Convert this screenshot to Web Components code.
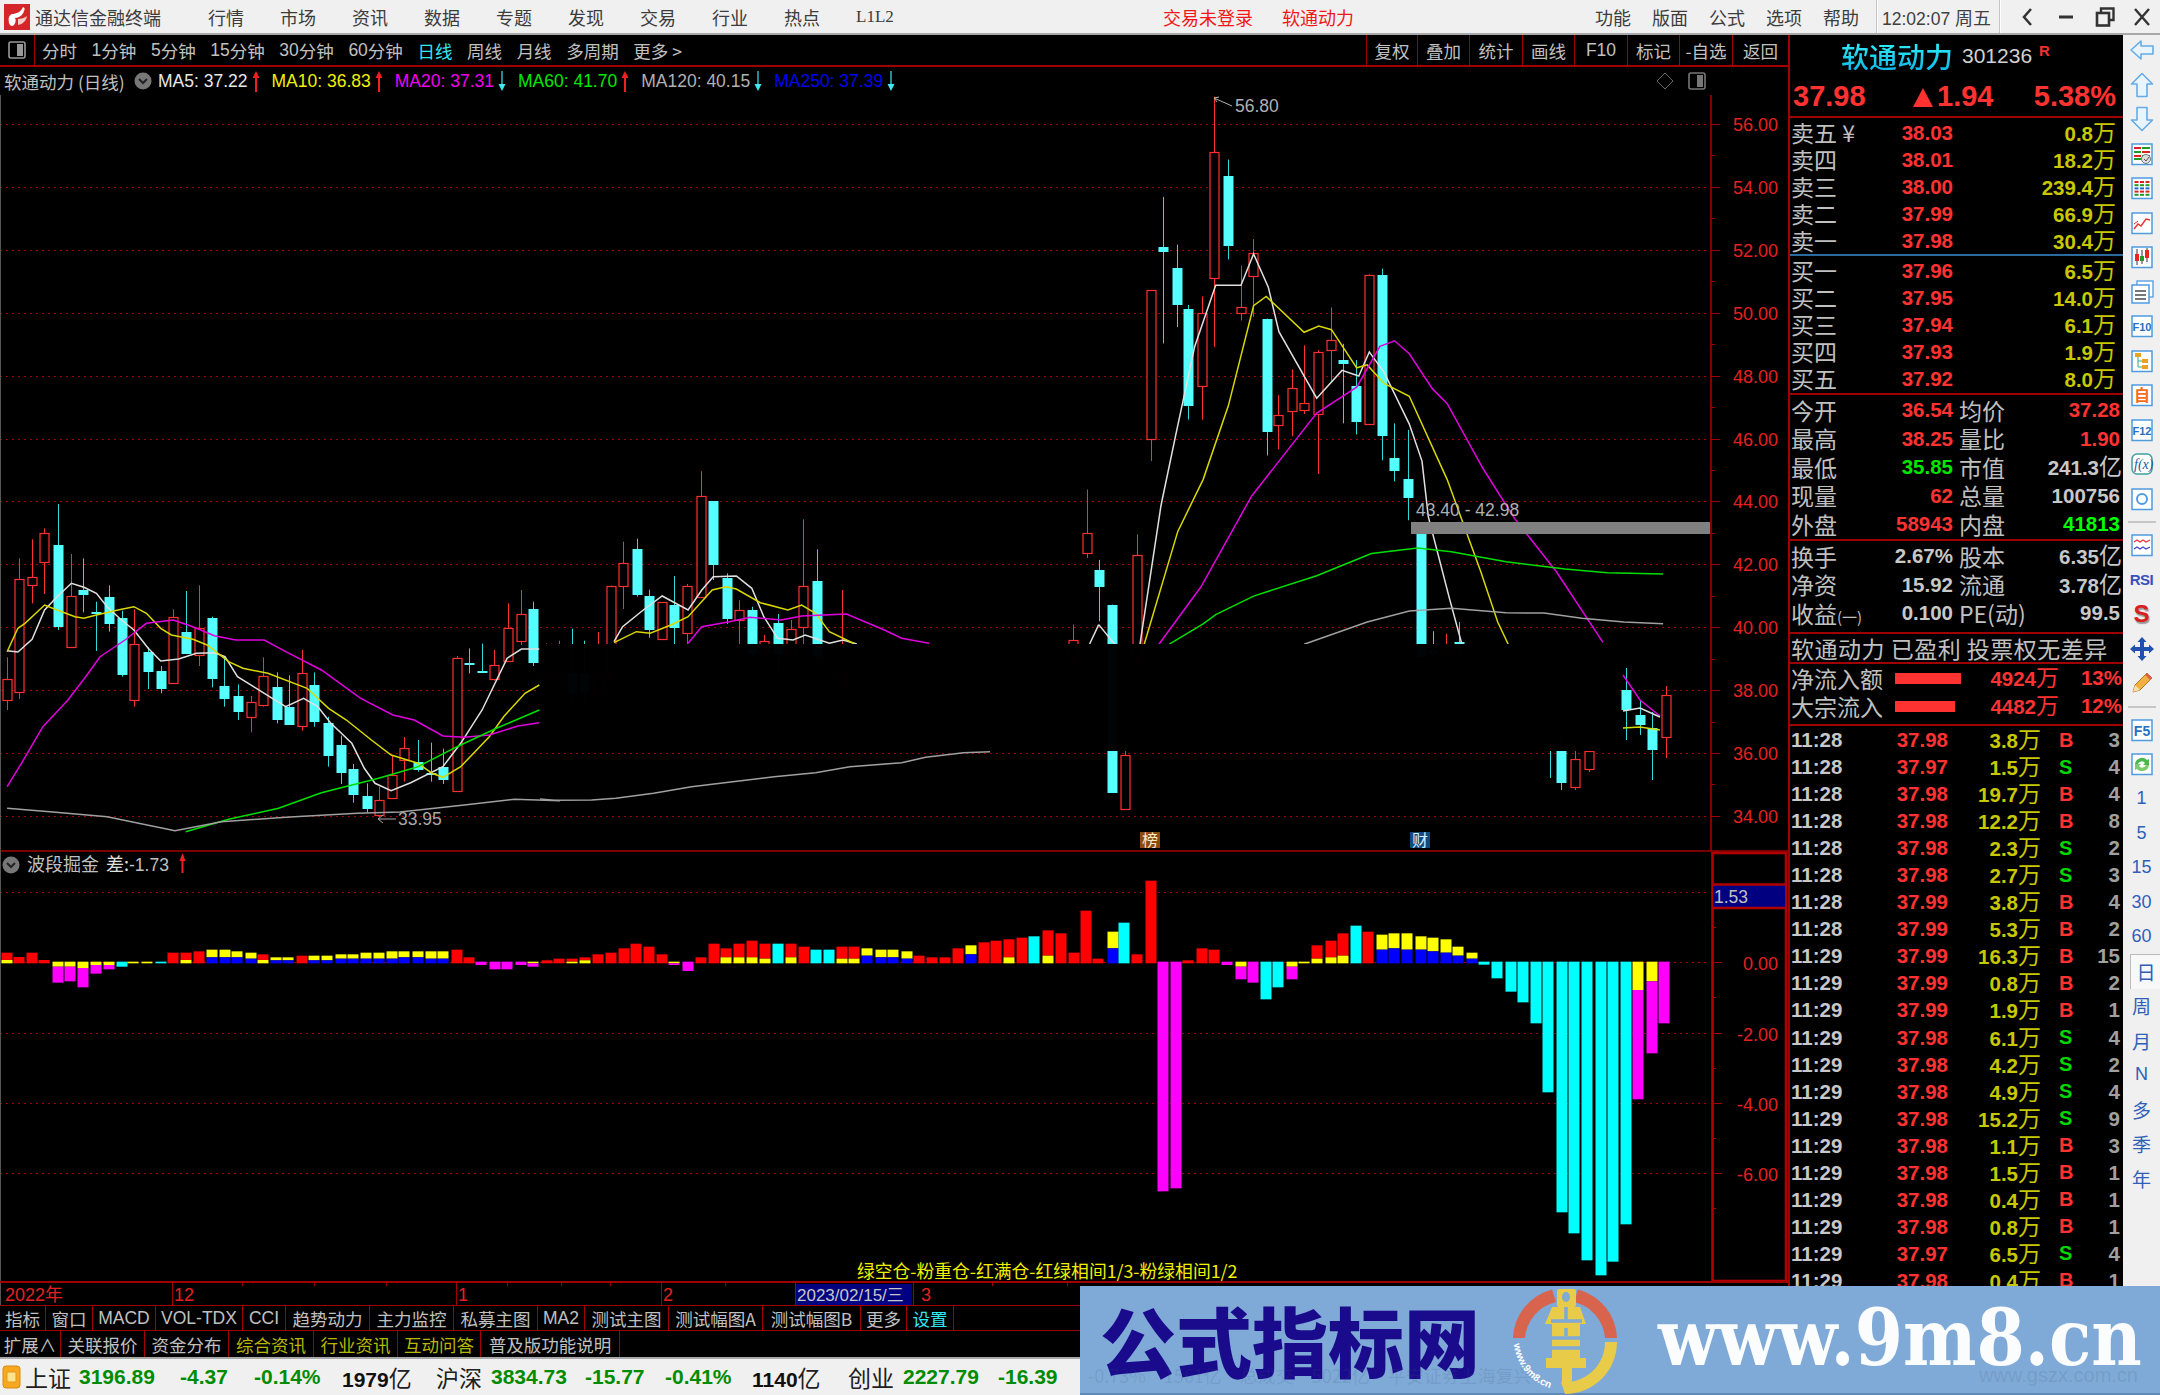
<!DOCTYPE html>
<html lang="zh"><head><meta charset="utf-8"><title>通达信金融终端</title>
<style>html,body{margin:0;padding:0;background:#000;overflow:hidden}</style></head>
<body><tdx-app></tdx-app>
<script>
const SANS='"Liberation Sans","Noto Sans CJK SC",sans-serif';
const CJK='"Noto Sans CJK SC","Liberation Sans",sans-serif';
class Base extends HTMLElement{
  constructor(){super();this.attachShadow({mode:'open'}).innerHTML=`<style>${this.constructor.css||''}</style>${this.render()}`;}
  render(){return '<slot></slot>';}
}
const chev=(x=0)=>`<svg width="18" height="18" viewBox="0 0 18 18"><circle cx="9" cy="9" r="8.5" fill="#777"/><path d="M5 7l4 4 4-4" fill="none" stroke="#222" stroke-width="2"/></svg>`;
const arr=(up)=>up?`<svg width="8" height="22" viewBox="0 0 8 22"><path d="M4 1L7.5 8H5V22H3V8H.5Z" fill="#f02020"/></svg>`:`<svg width="8" height="22" viewBox="0 0 8 22"><path d="M4 21L.5 14H3.4V1H4.6V14H7.5Z" fill="#40e8f0"/></svg>`;

class TdxTitlebar extends Base{
 static css=`:host{display:flex;align-items:center;height:35px;box-sizing:border-box;background:#f0f0f0;border-bottom:2px solid #a8a8a8;font:18px ${CJK};color:#3c3c3c;white-space:nowrap;padding-left:4px}
 .logo{width:26px;height:26px;margin-right:5px;flex:none}
 .t{margin-right:46px;width:127px}
 .m{width:36px;margin-right:36px;text-align:center;flex:none}
 .l{font:17px "Liberation Serif",serif;width:36px}
 .red{color:#f01818}.a{margin-left:235px;width:96px}.b{margin-left:23px;width:76px}
 .r{margin-left:auto;display:flex;align-items:center;height:33px}
 .f{width:36px;margin-right:21px;text-align:center}
 .f:nth-child(5){margin-right:17px}
 .sep{width:1px;height:33px;background:#c4c4c4;box-shadow:1px 0 #fff}
 .time{font-family:${SANS};width:122px;padding-left:5px;box-sizing:border-box;font-size:17.5px;color:#404040}
 .time b{font:18px ${CJK}}
 .w{width:39px;display:flex;justify-content:center}`;
 render(){return `<svg class="logo" viewBox="0 0 26 26"><rect width="26" height="26" fill="#d4252b"/><path d="M19 3C17 8 12 10 8 10c-3 1-4 4-3 9 1 3 3 4 5 2 2-3 2-5 1-7 4 0 8-3 9-7 1-2 1-3-1-4z" fill="#fff"/><path d="M14 15c3 0 7-1 9-3-1 5-4 8-9 9z" fill="#f6c9c9"/></svg>
 <span class="t">通达信金融终端</span>
 ${['行情','市场','资讯','数据','专题','发现','交易','行业','热点'].map(s=>`<span class="m">${s}</span>`).join('')}
 <span class="m l">L1L2</span><span class="red a">交易未登录</span><span class="red b">软通动力</span>
 <span class="r">${['功能','版面','公式','选项','帮助'].map(s=>`<span class="f">${s}</span>`).join('')}<i class="sep"></i><span class="time">12:02:07 <b>周五</b></span><i class="sep"></i>
 <span class="w" style="margin-left:7px"><svg width="14" height="22" viewBox="0 0 14 22"><path d="M11 3L4 11l7 8" fill="none" stroke="#333" stroke-width="2.5"/></svg></span>
 <span class="w"><svg width="16" height="22" viewBox="0 0 16 22"><path d="M1 11h14" stroke="#333" stroke-width="3"/></svg></span>
 <span class="w"><svg width="20" height="20" viewBox="0 0 20 20"><path d="M6 5V1.5h12.5V13H15" fill="none" stroke="#333" stroke-width="2.4"/><rect x="2" y="6" width="12" height="12.5" fill="none" stroke="#333" stroke-width="2.6"/></svg></span>
 <span class="w" style="width:36px"><svg width="20" height="20" viewBox="0 0 20 20"><path d="M3 2l14 16M17 2L3 18" stroke="#333" stroke-width="2.4"/></svg></span></span>`;}
}
class TdxToolbar extends Base{
 static css=`:host{display:flex;height:32px;box-sizing:border-box;background:#000;border-bottom:2px solid #a00000;font:17.5px ${CJK};color:#c0c0c0;align-items:stretch;white-space:nowrap}
 .ic{width:34px;border-right:1px solid #a00000;margin-right:7px;display:flex;align-items:center;justify-content:center}
 .i{margin-right:14.6px;display:flex;align-items:center}.n{font-family:${SANS}}
 .sel{color:#30e8f0}
 .right{margin-left:auto;display:flex}
 .c{border-left:1px solid #a00000;display:flex;align-items:center;justify-content:center;box-sizing:border-box}`;
 render(){const items=['分时','<span class=n>1</span>分钟','<span class=n>5</span>分钟','<span class=n>15</span>分钟','<span class=n>30</span>分钟','<span class=n>60</span>分钟'];
 const cells=[['复权',51],['叠加',52],['统计',53],['画线',52],['<span class=n>F10</span>',53],['标记',52],['-自选',53],['返回',56]];
 return `<span class="ic"><svg width="18" height="18" viewBox="0 0 18 18"><rect x="1" y="1" width="16" height="16" rx="2" fill="none" stroke="#999" stroke-width="1.6"/><rect x="9" y="3" width="6" height="12" fill="#999"/></svg></span>
 ${items.map(s=>`<span class="i">${s}</span>`).join('')}<span class="i sel">日线</span><span class="i">周线</span><span class="i">月线</span><span class="i">多周期</span><span class="i">更多 &gt;</span>
 <span class="right">${cells.map(([s,w])=>`<span class="c" style="width:${w}px">${s}</span>`).join('')}</span>`;}
}
class TdxInfo extends Base{
 static css=`:host{display:flex;height:28px;align-items:center;background:#000;font:17.5px ${SANS};white-space:nowrap;color:#c0c0c0;padding-left:4px}
 .n{font-family:${CJK};width:122px;margin-right:8px}
 .g{display:flex;align-items:center;gap:4px;margin-right:12px}
 svg{flex:none}
 .right{margin-left:auto;display:flex;gap:14px;align-items:center;margin-right:82px}`;
 render(){const g=[['MA5: 37.22','#e8e8e8',1],['MA10: 36.83','#f0f000',1],['MA20: 37.31','#f000f0',0],['MA60: 41.70','#00e800',1],['MA120: 40.15','#b0b0b0',0],['MA250: 37.39','#0000f0',0]];
 return `<span class="n">软通动力 (日线)</span><span style="margin-right:6px;display:flex">${chev()}</span>
 ${g.map(([t,c,u])=>`<span class="g"><span style="color:${c}">${t}</span>${arr(u)}</span>`).join('')}
 <span class="right"><svg width="18" height="18" viewBox="0 0 18 18"><path d="M9 1l8 8-8 8-8-8z" fill="none" stroke="#666"/></svg><svg width="18" height="18" viewBox="0 0 18 18"><rect x="1" y="1" width="16" height="16" rx="2" fill="none" stroke="#777" stroke-width="1.6"/><rect x="9" y="3" width="6" height="12" fill="#777"/></svg></span>`;}
}
/* ---------- chart ---------- */
const Z8=(x,y)=>[x/2.8,480+y/3],Z10=(x,y)=>[540+x/2.904,440+y/3],Z9=(x,y)=>[1060+x/2.376,80+y/2.703];
const C8=`19,532,597,660,690,R;52,235,298,637,657,R;90,178,290,314,370,R;123,145,160,246,342,R;161,72,195,440,450,C;199,222,349,503,503,R;232,235,330,346,397,C;270,365,397,402,513,C;304,316,352,432,455,C;342,392,415,585,590,C;375,388,493,660,680,R;413,502,515,576,627,C;451,558,573,626,640,C;485,388,412,611,611,R;522,333,456,522,522,C;556,316,444,526,558,R;594,410,415,598,622,C;627,530,617,657,680,C;665,613,649,697,720,C;703,648,665,710,757,R;737,532,587,673,680,R;775,577,622,720,730,C;808,586,680,733,733,C;846,510,578,737,752,R;880,577,614,724,740,C;918,710,730,828,860,C;956,767,794,877,912,C;988,852,866,945,968,C;1027,910,947,986,998,C;1060,920,961,1005,1010,R;1098,825,884,953,953,R;1131,771,803,838,905,R;1170,780,845,868,875,C;1207,788,878,882,905,C;1241,806,860,900,912,C;1279,528,533,931,935,R;1312,505,550,553,580,C;1350,491,573,576,578,C;1383,510,556,597,602,R;1421,370,444,544,544,R;1459,330,403,485,495,R;1493,365,388,549,558,C`;
const C10=`18,610,700,720,720,R;54,602,700,720,720,R;93,566,700,760,780,C;128,602,700,760,780,C;168,576,700,760,780,R;207,437,437,700,720,R;241,305,370,438,507,R;281,296,328,467,470,C;316,449,468,570,593,C;355,487,487,597,597,R;390,408,495,565,640,C;428,432,437,578,640,R;468,94,167,470,470,R;503,184,184,376,420,C;542,400,415,538,552,C;577,481,509,538,640,R;616,500,509,640,650,C;651,585,604,640,650,R;690,522,548,640,690,C;729,540,568,640,660,R;764,238,437,560,640,R;803,328,422,650,680,C;877,450,700,720,740,R`;
const C9=`32,1472,1515,1560,1580,R;64,1107,1225,1280,1292,R;92,1297,1325,1370,1463,C;124,1418,1418,1925,1925,C;184,1228,1285,1560,1600,R;216,568,568,970,1030,R;245,316,452,465,712,C;277,445,507,606,668,C;305,608,620,882,918,C;338,585,630,828,918,R;366,45,195,536,722,R;398,215,260,448,485,C;430,502,613,630,650,R;459,430,467,528,640,R;491,645,645,950,1015,C;519,852,905,933,998,R;551,782,832,893,963,R;580,717,873,893,903,R;612,730,734,901,1065,R;644,615,703,731,815,R;672,713,758,768,928,C;704,757,828,926,958,C;733,525,528,930,930,R;765,510,527,963,1028,C;794,928,1022,1056,1085,C;826,946,1079,1130,1190,C;858,1228,1228,1560,1560,C;886,1490,1540,1550,1560,C;918,1497,1540,1550,1560,R;947,1465,1520,1530,1560,C`;
const L8={'#e0e0e0':[20,512,50,516,90,478,125,390,160,350,200,310,235,322,270,340,300,380,340,420,375,450,415,505,450,543,500,537,550,520,600,518,630,530,665,590,740,640,800,680,850,655,890,680,925,728,985,790,1020,865,1050,910,1095,932,1150,908,1240,860,1290,790,1350,690,1420,535,1460,507,1510,507],
 '#d8d800':[20,515,50,445,70,430,125,375,160,390,210,410,235,415,270,405,330,390,375,380,410,400,450,445,480,465,540,478,580,495,640,545,680,565,750,580,860,625,920,685,970,720,1040,780,1095,825,1170,850,1210,880,1240,892,1290,860,1370,770,1410,710,1470,640,1510,615],
 '#e000e0':[20,920,60,850,120,740,190,660,240,590,280,530,350,480,410,430,485,420,540,440,600,467,660,480,740,480,800,515,900,570,1010,655,1100,705,1160,720,1240,768,1300,772,1370,765,1450,738,1510,728],
 '#00e000':[520,1055,640,1018,780,985,900,938,1060,895,1170,860,1280,800,1390,745,1510,690],
 '#a0a0a0':[20,985,140,995,300,1010,490,1052,620,1025,800,1012,1000,1000,1120,996,1300,975,1440,958,1568,962]};
const L10={'#e0e0e0':[215,605,240,560,300,510,355,468,430,510,470,450,503,410,570,408,615,445,650,530,690,595,735,600,770,585,840,610,880,600,920,612],
 '#d8d800':[215,608,280,575,320,580,380,555,430,530,500,450,540,440,570,447,640,488,720,510,760,495,800,520,840,575,910,610],
 '#e000e0':[430,610,470,560,550,545,610,532,700,540,760,528,890,522,1000,570,1050,595,1130,610],
 '#a0a0a0':[0,1077,40,1081,150,1080,220,1075,330,1060,440,1040,560,1025,680,1010,800,998,900,980,1050,968,1120,952,1230,938,1307,935]};
const L9={'#e0e0e0':[190,1525,240,1150,275,960,320,720,370,555,430,555,460,470,495,560,520,680,610,860,670,785,710,800,735,735,770,790,830,930,860,1030,875,1180,925,1400,955,1525],
 '#d8d800':[200,1525,280,1220,340,1080,400,880,460,610,490,585,580,682,615,665,645,675,705,778,730,770,770,820,830,855,920,1080,1000,1330,1040,1465,1065,1525],
 '#e000e0':[235,1525,335,1370,455,1125,610,900,705,830,760,720,795,705,830,740,885,835,920,875,1005,1050,1080,1185,1180,1330,1290,1520],
 '#00e000':[260,1525,340,1470,370,1445,460,1395,610,1340,740,1280,850,1265,930,1275,1060,1302,1200,1322,1300,1332,1433,1335],
 '#a0a0a0':[580,1525,730,1465,830,1435,930,1428,1060,1440,1150,1441,1240,1455,1340,1465,1433,1470]};
const Bars11=`10:r338-360,y360-370;27:r351-370;45:r338-370;63:r360-370;82:y365-380,m380-428;100:y365-380,m380-424;118:y365-384,m384-442;137:y365-375,m375-401;155:y365-375,m375-388;174:c365-380;190:y365-370;210:y365-370;229:c365-370;246:r338-370;265:r338-360,y360-370;283:r334-370;302:y329-352,b352-370;320:y329-352,b352-370;338:y334-352,b352-370;358:y338-356,b356-370;375:r343-360,y360-370;394:y352-361,b361-370;411:y352-361,b361-370;430:r347-370;447:y347-361,b361-370;466:y347-361,b361-370;486:y343-356,b356-370;503:y343-356,b356-370;522:y338-356,b356-370;540:y338-356,b356-370;559:y334-356,b356-370;576:y334-352,b352-370;595:y334-352,b352-370;614:y334-356,b356-370;631:y334-356,b356-370;651:r329-370;668:r352-370;686:m365-375;705:m365-388;723:m365-388;742:m365-375;760:y365-370,m370-380;779:r361-370;796:r356-370;815:r356-365,y365-370;833:r352-361,y361-370;852:r343-370;871:r338-370;889:r325-370;907:r311-370;925:r320-370;944:r343-370;961:y365-370,m370-375;980:m365-393;999:r352-370;1017:r311-370;1035:r325-352,y352-370;1053:r311-352,y352-370;1072:r302-352,y352-370;1090:r311-356,y356-370;1108:c311-370;1127:r311-352,y352-370;1145:r320-370;1163:c329-370;1182:c329-370;1200:r320-356,y356-370;1217:r320-356,y356-370;1236:y325-347,b347-370;1256:y329-352,b352-370;1273:y329-352,b352-370;1292:y334-356,b356-370;1310:r347-370;1328:r352-370;1347:r352-370;1365:r325-370;1384:y316-343,b343-370;1402:r307-370;1420:r302-370;1438:r298-352,y352-370;1456:r293-370;1474:c289-370;1493:r271-347,y347-370;1512:r280-370;1530:r338-370`;
const Bars12=`14:r212-370;40:r356-370;71:y275-325,b325-370;96:c248-370;125:r343-370;155:r122-370;181:m365-1054;210:m365-1045;236:r361-370;266:r325-370;292:r329-370;321:m365-375;351:y365-380,m380-418;377:m365-428;406:c365-478;432:c365-442;462:y365-380,m380-418;488:y365-370;517:r316-356,y356-370;547:r302-352,y352-370;573:r280-347,y347-370;602:c257-370;628:r275-370;658:y284-329,b329-370;684:y280-325,b325-370;713:y280-329,b329-370;743:y289-329,b329-370;769:y293-334,b334-370;798:y298-338,b338-370;824:y320-347,b347-370;854:y338-356,b356-370;880:c365-374;909:c365-415;939:c365-455;965:c365-487;994:c365-550;1020:c365-757;1050:c365-1117;1076:c365-1180;1105:c365-1261;1135:c365-1306;1161:c365-1265;1190:c365-1153;1216:y365-450,m450-778;1246:y365-424,m424-640;1272:m365-550`;
const COL={r:'#ff0000',y:'#ffff00',m:'#ff00ff',c:'#00ffff',b:'#0000ff'};
class TdxChart extends Base{
 static css=`:host{display:block;height:1211px;background:#000}svg{display:block}
 text{font-family:${SANS}}.cjk{font-family:${CJK}}`;
 render(){
  let s='';
  const R='#a00000',rect=(x,y,w,h,f,ex='')=>`<rect x="${x}" y="${y}" width="${w}" height="${h}" fill="${f}" ${ex}/>`;
  const ln=(a,b,c,d,col,w=1,ex='')=>`<line x1="${a}" y1="${b}" x2="${c}" y2="${d}" stroke="${col}" stroke-width="${w}" ${ex}/>`;
  const T=(x,y,t,fill,size=18,ex='')=>`<text x="${x}" y="${y}" fill="${fill}" font-size="${size}" ${ex}>${t}</text>`;
  const yP=p=>124+(56-p)*31.45;
  // grid + axis
  for(let p=56;p>=34;p-=2){const y=Math.round(yP(p));s+=ln(0,y+.5,1710,y+.5,'#a00000',1,'stroke-dasharray="2 4"');s+=ln(1711,y+.5,1720,y+.5,R);s+=T(1778,y+7,p.toFixed(2),'#e62020',18,'text-anchor="end"');if(p>34){const m=Math.round(yP(p-1));s+=ln(1711,m+.5,1715,m+.5,R);}}
  // candles
  const cand=(str,Z)=>str.split(';').forEach(r=>{const a=r.split(',');const[x,hi]=Z(+a[0],+a[1]);const t=Z(0,+a[2])[1],b=Z(0,+a[3])[1],lo=Z(0,+a[4])[1];const cx=Math.round(x)+.5;
    const col=a[5]=='R'?'#ff3030':'#55ffff';
    s+=ln(cx,hi,cx,lo,a[5]=='R'?'#ff3030':'#30d8d8',1);
    if(a[5]=='R')s+=rect(cx-4.5,Math.round(t)+.5,9,Math.max(1,Math.round(b-t)),'#000',`stroke="${col}" stroke-width="1.2"`);
    else s+=rect(cx-5,Math.round(t),10,Math.max(2,Math.round(b-t)),col);});
  cand(C8,Z8);cand(C10,Z10);cand(C9,Z9);
  // candles visible to the right of and below the masked band
  [[1550,751,0,0,778,'W'],[1561,735,751,783,790,'C'],[1575,740,759,787,790,'R'],[1589,742,751,769,772,'R'],[1125,700,755,809,809,'R'],[1626,668,690,710,740,'C'],[1640,700,715,725,735,'C'],[1652,712,728,750,780,'C'],[1666,686,695,737,758,'R']].forEach(([x,h,t,b,l,k])=>{const cx=x+.5,col=k=='R'?'#ff3030':'#55ffff';s+=ln(cx,h,cx,l,k=='R'?'#ff3030':'#30d8d8');if(k=='W')return;s+=k=='R'?rect(cx-4.5,t+.5,9,b-t,'#000',`stroke="${col}" stroke-width="1.2"`):rect(cx-5,t,10,b-t,col);});
  // MA lines
  const poly=(arr,Z,c,w=1.5)=>{let p=[];for(let i=0;i<arr.length;i+=2)p.push(Z(arr[i],arr[i+1]).map(v=>v.toFixed(1)).join(','));s+=`<polyline points="${p.join(' ')}" fill="none" stroke="${c}" stroke-width="${w}"/>`;};
  for(const k in L8)poly(L8[k],Z8,k);for(const k in L10)poly(L10[k],Z10,k);for(const k in L9)poly(L9[k],Z9,k);
  poly([92,1472,70,1525],Z9,'#e0e0e0');poly([92,1472,130,1525],Z9,'#e0e0e0');
  s+=`<polyline points="1623,675 1640,700 1660,716" fill="none" stroke="#e000e0" stroke-width="1.5"/><polyline points="1623,711 1640,708 1660,717" fill="none" stroke="#e0e0e0" stroke-width="1.5"/><polyline points="1623,728 1640,727 1660,730" fill="none" stroke="#d8d800" stroke-width="1.5"/>`;
  // mask band
  s+=rect(540,644,1080,107,'#000','opacity=".985"');
  // labels on price pane
  s+=rect(1411,522,299,12,'#808080');
  s+=T(1416,516,'43.40 - 42.98','#b0b0b0',17.5);
  s+=T(1235,112,'56.80','#b0b0b0',17.5)+`<path d="M1232 106L1214 98M1219 97l-5 1 3 4" fill="none" stroke="#b0b0b0"/>`;
  s+=T(398,825,'33.95','#a8a8a8',17.5)+`<path d="M396 819H378M383 815l-5 4 5 4" fill="none" stroke="#a8a8a8"/>`;
  s+=rect(1140,832,20,16,'#8a4a10')+T(1142,846,'榜','#ffe8c8',16,'class="cjk"');
  s+=rect(1410,832,20,16,'#104a80')+T(1412,846,'财','#d8f0ff',16,'class="cjk"');
  // sub pane
  [892,962,1032.5,1103,1173].forEach((y,i)=>{y=Math.round(y);s+=ln(0,y+.5,1710,y+.5,'#a00000',1,'stroke-dasharray="2 4"');s+=ln(1711,y+.5,1722,y+.5,R);});
  [927,997,1068,1138,1208].forEach(y=>s+=ln(1711,y+.5,1716,y+.5,R));
  [['0.00',963],['-2.00',1034],['-4.00',1104],['-6.00',1174]].forEach(([t,y])=>s+=T(1778,y+7,t,'#e62020',18,'text-anchor="end"'));
  const bars=(str,fx,fy)=>str.split(';').forEach(r=>{const[zx,segs]=r.split(':');const x=Math.round(fx(+zx));segs.split(',').forEach(g=>{const[a,b]=g.slice(1).split('-').map(fy);s+=rect(x-5.5,a,11,Math.max(1.5,b-a),COL[g[0]]);});});
  bars(Bars11,z=>z/1.425,z=>840+z/3);bars(Bars12,z=>1080+z/2.178,z=>840+z/3);
  s+=`<g transform="translate(2,857)"><circle cx="9" cy="8" r="8.5" fill="#777"/><path d="M5 6l4 4 4-4" fill="none" stroke="#222" stroke-width="2"/></g>`;
  s+=T(27,871,'波段掘金','#c0c0c0',18,'class="cjk"')+T(106,871,'差:','#e0e0e0',18,'class="cjk"')+T(129,871,'-1.73','#c0c0c0',17.5);
  s+=`<path d="M182.500 853l3 8h-2v12h-2v-12h-2z" fill="#f02020"/>`;
  s+=T(857,1278,'绿空仓-粉重仓-红满仓-红绿相间1/3-粉绿相间1/2','#f0f000',17.8,'class="cjk"');
  // frames
  s+=ln(0,851,1788,851,R,1.6)+ln(1711,95,1711,851,R,1.6)+ln(0.5,95,0.5,1306,'#555',1);
  s+=rect(1712.5,853,73.5,428,'none',`stroke="#b00000" stroke-width="2.6"`)+rect(1713,885,72,23,'#000080')+ln(1713,884.5,1785,884.5,'#b00000',2.4)+ln(1713,908,1785,908,'#b00000',2.4);
  s+=T(1714,903,'1.53','#c0c0c0',17.5);
  s+=ln(0,1282,1788,1282,R,2.2);
  // time axis
  [242,314,386,507,561,610,725,992,1067].forEach(x=>s+=ln(x+.5,1283,x+.5,1286,R));
  [172,456,661,795,913].forEach(x=>s+=ln(x+.5,1283,x+.5,1305,R));
  s+=T(5,1301,'2022<tspan class="cjk">年</tspan>','#e62020',18)+T(174,1301,'12','#e62020',18)+T(458,1301,'1','#e62020',18)+T(663,1301,'2','#e62020',18)+T(921,1301,'3','#e62020',18);
  s+=rect(796,1284,116,21,'#000080')+T(797,1301,'2023/02/15/<tspan class="cjk">三</tspan>','#c8c8c8',17);
  s+=ln(0,1305.5,1788,1305.5,R);
  return `<svg width="1788" height="1211" viewBox="0 95 1788 1211">${s}</svg>`;}
}
class TdxTab extends Base{
 static css=`:host{display:flex;align-items:center;justify-content:center;box-sizing:border-box;width:var(--w,80px);height:100%;border-right:1px solid #a00000;color:#c0c0c0;font:17.5px ${CJK};white-space:nowrap;flex:none}
 :host([tone=o]){color:#b8b800}:host([tone=c]){color:#30e8f0}
 ::slotted(*){font-family:${SANS}}`;
}
class TdxTabs extends Base{
 static css=`:host{display:block;background:#000}.r{display:flex;box-sizing:border-box;border-bottom:1.5px solid #a00000}.a{height:25px}.b{height:28px;border-bottom:2px solid #a8a8a8}`;
 render(){const a=[['指标',46],['窗口',47],['<span>MACD</span>',63],['<span>VOL-TDX</span>',87],['<span>CCI</span>',43],['趋势动力',84],['主力监控',84],['私募主图',84],['<span>MA2</span>',47],['测试主图',84],['测试幅图A',94],['测试幅图B',98],['更多',46],['设置',47,'c']];
 const b=[['扩展∧',61],['关联报价',84],['资金分布',84],['综合资讯',85,'o'],['行业资讯',84,'o'],['互动问答',83,'o'],['普及版功能说明',139]];
 const m=l=>l.map(([t,w,c])=>`<tdx-tab style="--w:${w}px"${c?` tone="${c}"`:''}>${t}</tdx-tab>`).join('');
 return `<div class="r a">${m(a)}</div><div class="r b">${m(b)}</div>`;}
}
/* ---------- quote panel ---------- */
class TdxSection extends Base{
 static css=`:host{display:block;box-sizing:border-box;border-bottom:2px solid #a00000}`;
}
const wan=(n,u='万')=>`${n}<i>${u}</i>`;
class TdxQuote extends Base{
 static css=`:host{display:block;width:335px;height:1324px;flex:none;box-sizing:border-box;border-left:2px solid #a00000;background:#000;color:#c0c0c0;font:bold 20.5px ${SANS};overflow:hidden;white-space:nowrap}
 i{font:normal 23px ${CJK};line-height:1}
 .L{font:normal 23px ${CJK};color:#c0c0c0;line-height:1;letter-spacing:0}
 .L small{font-size:15px}
 .red{color:#ff3232}.vol{color:#c8c800}.grn{color:#00e600}.lg{color:#00ff00}.gy{color:#c8c8c8}
 .num{text-align:right}
 .head{height:41px;display:flex;align-items:center;padding-left:51px}
 .name{font:500 28px ${CJK};line-height:1;background:linear-gradient(#30f0f8,#10b8e8);-webkit-background-clip:text;background-clip:text;color:transparent;margin-right:9px}
 .code{font:21px ${SANS};color:#d0d0d0;letter-spacing:0}
 .sup{font:bold 15px ${SANS};color:#f03030;margin-left:7px;align-self:flex-start;margin-top:7px}
 .price{height:40px;display:grid;grid-template-columns:120px 113px 90px;align-items:center;font-size:29px;color:#ff3232;padding-left:3px;letter-spacing:0}
 .price span:nth-child(3){text-align:right}
 .tri{display:inline-block;width:0;height:0;border:10px solid transparent;border-bottom:19px solid #ff3232;border-top:0;margin-right:4px;vertical-align:-1px}
 .r5{height:27px;display:grid;grid-template-columns:100px 62px 1fr;align-items:center;padding:0 7px 0 1px}
 .st{height:28.5px;display:grid;grid-template-columns:80px 82px 68px 1fr;align-items:center;padding:0 3px 0 1px}
 .st .num i{margin-right:-2px}
 .st>:nth-child(3){padding-left:6px}
 .banner{height:27px;display:flex;align-items:center;padding-left:1px;font:23px ${CJK};color:#c0c0c0;letter-spacing:.5px}
 .fl{height:28px;display:grid;grid-template-columns:104px 74px 90px 63px;align-items:center;padding-left:1px}
 .bar{height:11px;background:#ff3232;display:block}
 .tk{height:27.05px;display:grid;grid-template-columns:100px 57px 93px 40px 39px;align-items:center;padding-left:1px}
 .tk .bs{padding-left:18px;font-size:20px}
 .cnt{text-align:right;color:#a0a0a0}`;
 render(){
  const r5=(l,p,v,x='')=>`<div class="r5"><span class="L">${l}${x}</span><span class="num red">${p}</span><span class="num vol">${wan(v)}</span></div>`;
  const st=(a,b,c,d,ca='red',cb='red')=>`<div class="st"><span class="L">${a}</span><span class="num ${ca}">${b}</span><span class="L">${c}</span><span class="num ${cb}">${d}</span></div>`;
  const tk=`11:28 37.98 3.8 B 3|11:28 37.97 1.5 S 4|11:28 37.98 19.7 B 4|11:28 37.98 12.2 B 8|11:28 37.98 2.3 S 2|11:28 37.98 2.7 S 3|11:28 37.99 3.8 B 4|11:28 37.99 5.3 B 2|11:29 37.99 16.3 B 15|11:29 37.99 0.8 B 2|11:29 37.99 1.9 B 1|11:29 37.98 6.1 S 4|11:29 37.98 4.2 S 2|11:29 37.98 4.9 S 4|11:29 37.98 15.2 S 9|11:29 37.98 1.1 B 3|11:29 37.98 1.5 B 1|11:29 37.98 0.4 B 1|11:29 37.98 0.8 B 1|11:29 37.97 6.5 S 4|11:29 37.98 0.4 B 1`.split('|').map(l=>{const[t,p,v,b,c]=l.split(' ');return `<div class="tk"><span class="gy">${t}</span><span class="num red">${p}</span><span class="num vol">${wan(v)}</span><span class="bs" style="color:${b=='B'?'#ff3232':'#00d800'}">${b}</span><span class="cnt">${c}</span></div>`;}).join('');
  return `<tdx-section style="height:83px"><div class="head"><span class="name">软通动力</span><span class="code">301236</span><span class="sup">R</span></div>
  <div class="price"><span>37.98</span><span><b class="tri"></b>1.94</span><span>5.38%</span></div></tdx-section>
  <tdx-section style="height:138px;padding-top:1px;border-color:#2a6a9c">${r5('卖五','38.03','0.8',' ¥')}${r5('卖四','38.01','18.2')}${r5('卖三','38.00','239.4')}${r5('卖二','37.99','66.9')}${r5('卖一','37.98','30.4')}</tdx-section>
  <tdx-section style="height:139px;padding-top:1px">${r5('买一','37.96','6.5')}${r5('买二','37.95','14.0')}${r5('买三','37.94','6.1')}${r5('买四','37.93','1.9')}${r5('买五','37.92','8.0')}</tdx-section>
  <tdx-section style="height:146px;padding-top:1px">${st('今开','36.54','均价','37.28')}${st('最高','38.25','量比','1.90')}${st('最低','35.85','市值',wan('241.3','亿'),'grn','gy')}${st('现量','62','总量','100756','red','gy')}${st('外盘','58943','内盘','41813','red','lg')}</tdx-section>
  <tdx-section style="height:93px;padding-top:1px">${st('换手','2.67%','股本',wan('6.35','亿'),'gy','gy')}${st('净资','15.92','流通',wan('3.78','亿'),'gy','gy')}${st('收益<small>(一)</small>','0.100','PE(动)','99.5','gy','gy')}</tdx-section>
  <tdx-section style="height:30px"><div class="banner">软通动力&nbsp;已盈利&nbsp;投票权无差异</div></tdx-section>
  <tdx-section style="height:62px">
   <div class="fl"><span class="L">净流入额</span><span class="bar" style="width:66px"></span><span class="num red">${wan('4924')}</span><span class="num red">13%</span></div>
   <div class="fl"><span class="L">大宗流入</span><span class="bar" style="width:60px"></span><span class="num red">${wan('4482')}</span><span class="num red">12%</span></div></tdx-section>
  <div style="padding-top:.5px">${tk}</div>`;}
}
/* ---------- sidebar ---------- */
class TdxSidebar extends Base{
 static css=`:host{display:block;width:37px;flex:none;background:#f0f0f0;height:1324px;overflow:hidden;font:18px ${SANS};color:#2f5fb8}
 .list{margin-top:-2px;display:flex;flex-direction:column;align-items:center}
 .it{height:34.5px;width:100%;display:flex;align-items:center;justify-content:center;flex:none}
 .sep{height:12px;width:28px;flex:none;display:flex;align-items:center}.sep::after{content:"";display:block;width:100%;height:2px;background:#c6c6c6}
 .n{font-size:18px;color:#2f5fb8}.c{font:19px ${CJK};color:#2f5fb8}
 .rsi{font:bold 15px ${SANS};color:#3a50c0;letter-spacing:-.5px}
 .ss{font:bold 24px ${SANS};color:#d82020;text-shadow:1px 2px 1px #999}
 .on{background:#f8f8f8;border-top:1.5px solid #bbb;border-left:1.5px solid #bbb;margin-left:8px;width:31px;box-sizing:border-box}`;
 render(){
  const S='#4f9be0';
  const sv=(inner,extra='')=>`<svg width="26" height="26" viewBox="0 0 26 26" ${extra}>${inner}</svg>`;
  const box=inner=>sv(`<rect x="3" y="3" width="20" height="20.5" fill="#fff" stroke="${S}" stroke-width="1.5"/>${inner}`);
  const ftext=t=>`<text x="13" y="17.500" text-anchor="middle" font-size="11" fill="#2a6fc0" font-family="Liberation Sans" font-weight="700">${t}</text>`;
  const arrow=d=>sv(`<path d="${d}" fill="#eaf4fd" stroke="#63ace8" stroke-width="1.6" stroke-linejoin="round"/>`);
  const hl=(x,y,w,c)=>`<rect x="${x}" y="${y}" width="${w}" height="2" fill="${c}"/>`;
  let rows='';['#d22','#292','#d22'].forEach((c,i)=>rows+=hl(5,6+i*4,7,c)+hl(13,6+i*4,8,i==1?'#d22':'#292'));
  let dots='';for(let y=0;y<5;y++)for(let x=0;x<3;x++)dots+=hl(5.5+x*5.5,6+y*3.2,4,['#d22','#292','#26c','#d22','#292'][y]);
  const items=[
   arrow('M2 13 12 4v5h12v8H12v5z'),arrow('M13 1.5 23.5 12H18v12.5H8V12H2.5z'),arrow('M13 24.5 23.5 14H18V1.5H8V14H2.5z'),
   box(rows+`<circle cx="17" cy="18" r="4.5" fill="#ddd" stroke="#777"/><path d="M15 18l2 2 3-4" stroke="#555" fill="none"/>`+hl(5,17,7,'#292')),
   box(dots),
   box(`<path d="M5 19l4-5 3 2 5-7 4 1" fill="none" stroke="#e33" stroke-width="1.5"/><path d="M5 14l4-3" stroke="#e33"/>`),
   box(`<path d="M8 5v16M13 6v14M18 4v14" stroke="#333"/><rect x="6" y="10" width="4" height="7" fill="#e22"/><rect x="11" y="12" width="4" height="5" fill="#293"/><rect x="16" y="6" width="4" height="8" fill="#e22"/>`),
   sv(`<rect x="8" y="2" width="16" height="16" fill="#fff" stroke="${S}" stroke-width="1.3"/><rect x="3" y="6" width="17" height="18" fill="#fff" stroke="${S}" stroke-width="1.5"/>`+hl(6,11,11,'#777')+hl(6,15,11,'#777')+hl(6,19,11,'#777')),
   box(ftext('F10')),
   box(`<rect x="6" y="5" width="6" height="4" fill="#f0a020"/><rect x="13" y="11" width="6" height="4" fill="#f0a020"/><rect x="13" y="17" width="6" height="4" fill="#f0a020"/><path d="M9 9v10h4M9 13h4" stroke="#3a8" fill="none"/>`),
   box(`<text x="13" y="19" text-anchor="middle" font-size="16" fill="#f07020" font-family="Noto Sans CJK SC" font-weight="700">自</text>`),
   box(ftext('F12')),
   sv(`<rect x="3" y="3" width="20" height="20" rx="5" fill="#fff" stroke="#40a0a0" stroke-width="1.5"/><text x="5" y="18" font-size="14" font-style="italic" fill="#2060a0" font-family="Liberation Serif">f(x)</text>`),
   box(`<circle cx="13" cy="13" r="5" fill="none" stroke="#4f9be0" stroke-width="2"/>`),'-',
   box(`<path d="M5 10l3-2 3 2 3-2 3 2 4-2" fill="none" stroke="#e33" stroke-width="1.3"/><path d="M5 17l3-2 3 2 3-2 3 2 4-2" fill="none" stroke="#44c" stroke-width="1.3"/>`),
   `<span class="rsi">RSI</span>`,
   `<span class="ss">S</span>`,
   sv(`<path d="M13 1l4.500 5H15v5h5V8.500l5 4.500-5 4.500V15h-5v5h2.500L13 25l-4.500-5H11v-5H6v2.500L1 13l5-4.500V11h5V6H8.500z" fill="#1e50b0"/>`),
   sv(`<path d="M4 22l2-7L18 3l5 5-12 12z" fill="#f2b040" stroke="#b87820"/><path d="M4 22l2-7 5 5z" fill="#f5e0b0"/><path d="M18 3l5 5-2 2-5-5z" fill="#e06050"/>`),'-',
   box(`<text x="13" y="18.500" text-anchor="middle" font-size="14" fill="#2a6fc0" font-family="Liberation Sans" font-weight="700">F5</text>`),
   box(`<path d="M6 13a7 7 0 0 1 12-4l2-1v6h-6l2-2a4 4 0 0 0-7 1z" fill="#4bb84b"/><path d="M20 14a7 7 0 0 1-12 4l-2 1v-6h6l-2 2a4 4 0 0 0 7-1z" fill="#7ccc6c"/>`),
   `<span class="n">1</span>`,`<span class="n">5</span>`,`<span class="n">15</span>`,`<span class="n">30</span>`,`<span class="n">60</span>`,
   `<span class="c">日</span>`,`<span class="c">周</span>`,`<span class="c">月</span>`,`<span class="n">N</span>`,`<span class="c">多</span>`,`<span class="c">季</span>`,`<span class="c">年</span>`];
  return `<div class="list">${items.map(h=>h=='-'?'<div class="sep"></div>':`<div class="it${h.includes('>日<')?' on':''}">${h}</div>`).join('')}</div>`;}
}
class TdxStatus extends Base{
 static css=`:host{display:flex;height:36px;align-items:center;box-sizing:border-box;background:#f0f0f0;font:bold 21px ${SANS};white-space:nowrap;color:#008c00;padding-left:2px}
 i{font:normal 23px ${CJK};color:#202020}
 .k{color:#111}
 span{flex:none}`;
 render(){
  const p=(w,t,c='')=>`<span class="${c}" style="width:${w}px">${t}</span>`;
  return `<svg width="19" height="24" viewBox="0 0 19 24" style="flex:none;margin-right:4px"><rect x="1" y="1" width="17" height="22" rx="3" fill="#f7a81e" stroke="#d88a10"/><rect x="5" y="7" width="9" height="10" rx="1" fill="#fde48c" stroke="#e09a20"/></svg>
  ${p(54,'<i>上证</i>')}${p(101,'3196.89')}${p(74,'-4.37')}${p(88,'-0.14%')}${p(94,'1979<i>亿</i>','k')}${p(55,'<i>沪深</i>')}${p(94,'3834.73')}${p(80,'-15.77')}${p(87,'-0.41%')}${p(96,'1140<i>亿</i>','k')}${p(55,'<i>创业</i>')}${p(95,'2227.79')}${p(70,'-16.39')}`;}
}
class TdxWatermark extends Base{
 static css=`:host{position:absolute;left:1080px;top:1286px;width:1080px;height:109px;box-sizing:border-box;background:#7fa9d6;border-bottom:2px solid #5f8ab8;display:flex;align-items:center;padding-left:20px}
 .t{font:900 76px/1 ${CJK};color:#1a0a8c;flex:none;width:380px;margin-top:-1px;white-space:nowrap}
 svg{flex:none;margin-left:30px}
 .u{font:bold 69px/1 "DejaVu Serif",serif;color:#fafcfe;margin-left:38px;white-space:nowrap;flex:none;transform-origin:0 50%;transform:scale(1.007,1.14);margin-top:-4px}
 .g{position:absolute;left:8px;top:76px;font:18px ${CJK};color:rgba(60,90,130,.16);white-space:nowrap}
 .h{position:absolute;right:22px;top:78px;font:20px ${SANS};color:rgba(60,90,130,.16)}`;
 render(){return `<span class="g">-0.73%　1561亿　总成交　5022亿　平安证券上海复兴</span><span class="h">www.gszx.com.cn</span>
 <span class="t">公式指标网</span>
 <svg width="110" height="108" viewBox="0 0 110 108"><defs><path id="arc" d="M4 58A51 51 0 0 0 44 103"/></defs>
 <path d="M3 52A52 52 0 0 1 42 3.500L46 16A40 40 0 0 0 15 52Z" fill="#d8644e"/><path d="M107 52A52 52 0 0 0 68 3.500L64 16A40 40 0 0 1 95 52Z" fill="#d8644e"/>
 <path d="M107 56A52 52 0 0 1 55 108L51 96A40 40 0 0 0 95 56Z" fill="#e8cb48"/>
 <rect x="47" y="3" width="19" height="18" rx="2" fill="#e8cb48"/><ellipse cx="56" cy="11" rx="4" ry="5" fill="#7fa9d6"/>
 <path d="M42 21H70L76 38H70V72H76V82H62V100H52V82H36V72H42V38H35Z" fill="#e8cb48"/>
 <path d="M41 35H72M41 52H72M56 21V36M56 42V50M42 62H70" stroke="#7fa9d6" stroke-width="3.500" fill="none"/>
 <text font-size="10" fill="#fff" font-family="Liberation Sans" font-weight="700"><textPath href="#arc">www.9m8.cn</textPath></text></svg>
 <span class="u">www.9m8.cn</span>`;}
}
class TdxApp extends Base{
 static css=`:host{display:block;position:relative;width:2160px;height:1395px;overflow:hidden;background:#000}
 .main{display:flex;height:1324px}.left{width:1788px;flex:none}`;
 render(){return `<tdx-titlebar></tdx-titlebar><div class="main"><div class="left"><tdx-toolbar></tdx-toolbar><tdx-info></tdx-info><tdx-chart></tdx-chart><tdx-tabs></tdx-tabs></div><tdx-quote></tdx-quote><tdx-sidebar></tdx-sidebar></div><tdx-status></tdx-status><tdx-watermark></tdx-watermark>`;}
}
const reg={'tdx-titlebar':TdxTitlebar,'tdx-toolbar':TdxToolbar,'tdx-info':TdxInfo,'tdx-chart':TdxChart,'tdx-tab':TdxTab,'tdx-tabs':TdxTabs,'tdx-section':TdxSection,'tdx-quote':TdxQuote,'tdx-sidebar':TdxSidebar,'tdx-status':TdxStatus,'tdx-watermark':TdxWatermark,'tdx-app':TdxApp};
for(const k in reg)customElements.define(k,reg[k]);
</script></body></html>
